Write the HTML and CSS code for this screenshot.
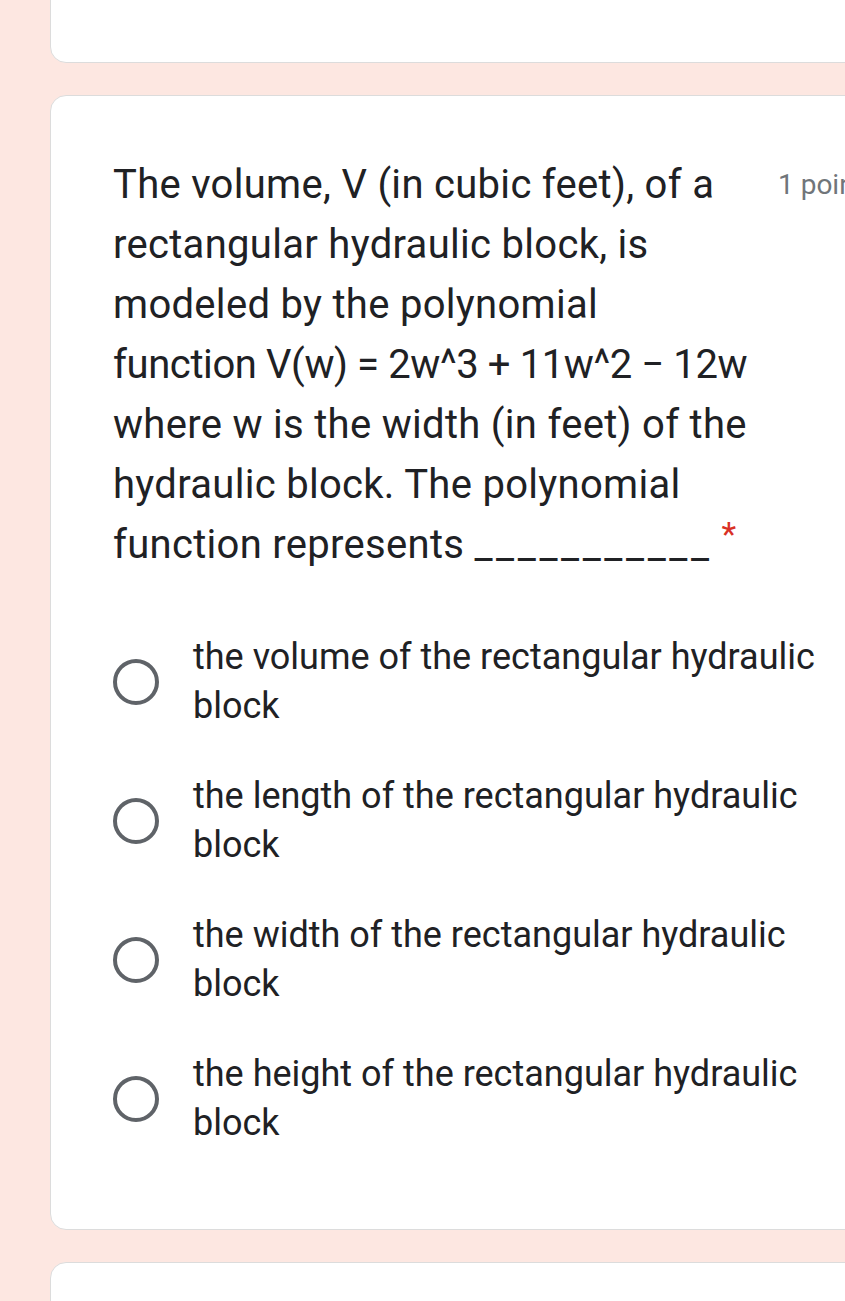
FILE: index.html
```html
<!DOCTYPE html>
<html>
<head>
<meta charset="utf-8">
<link rel="stylesheet" href="styles.css">
</head>
<body>
<div class="page">
  <div class="card card-top"></div>
  <div class="card card-main">
    <div class="q-head">
      <div class="q-title">The volume, V (in cubic feet), of a<br>rectangular hydraulic block, is<br>modeled by the polynomial<br><span class="eq">function V(w) = 2w^3 + 11w^2 − 12w</span><br>where w is the width (in feet) of the<br>hydraulic block. The polynomial<br>function represents <span class="blank">___________</span><span class="req">*</span></div>
      <div class="q-points">1 point</div>
    </div>
    <div class="options">
      <label class="option"><span class="radio"></span><span class="opt-text">the volume of the rectangular hydraulic block</span></label>
      <label class="option"><span class="radio"></span><span class="opt-text">the length of the rectangular hydraulic block</span></label>
      <label class="option"><span class="radio"></span><span class="opt-text">the width of the rectangular hydraulic block</span></label>
      <label class="option"><span class="radio"></span><span class="opt-text">the height of the rectangular hydraulic block</span></label>
    </div>
  </div>
  <div class="card card-bottom"></div>
</div>
</body>
</html>
```

FILE: styles.css
```css
html, body {
  margin: 0;
  padding: 0;
  background: #fde7e1;
  overflow: hidden;
}
.page {
  display: flex;
  flex-direction: column;
  gap: 32px;
  padding-left: 50px;
  margin-top: -40px;
  width: 900px;
}
.card {
  background: #fff;
  border: 1.5px solid #dcdcdc;
  border-radius: 16px;
  box-sizing: border-box;
}
.card-top {
  height: 103px;
}
.card-bottom {
  height: 120px;
}
.card-main {
  padding: 59px 0 81px 62px;
}
.q-head {
  display: flex;
  align-items: flex-start;
  gap: 25px;
}
.q-title {
  width: 640px;
  flex: none;
  white-space: nowrap;
  font-family: Roboto, "Noto Sans", sans-serif;
  font-size: 40px;
  letter-spacing: 0.3px;
  line-height: 60px;
  color: #202124;
}
.eq {
  letter-spacing: -0.4px;
}
.blank {
  letter-spacing: 3.6px;
}
.req {
  color: #d93025;
  font-size: 34px;
  line-height: 0;
  vertical-align: 12px;
  margin-left: 9px;
}
.q-points {
  font-family: Roboto, sans-serif;
  font-size: 28px;
  line-height: 60px;
  color: #70757a;
  white-space: nowrap;
}
.options {
  display: flex;
  flex-direction: column;
  gap: 41px;
  margin-top: 58px;
}
.option {
  display: flex;
  align-items: center;
  gap: 34px;
}
.radio {
  flex: none;
  width: 46px;
  height: 46px;
  border: 4px solid #5f6368;
  border-radius: 50%;
  box-sizing: border-box;
}
.opt-text {
  width: 650px;
  font-family: Roboto, sans-serif;
  font-size: 36px;
  line-height: 49px;
  color: #202124;
}
```
